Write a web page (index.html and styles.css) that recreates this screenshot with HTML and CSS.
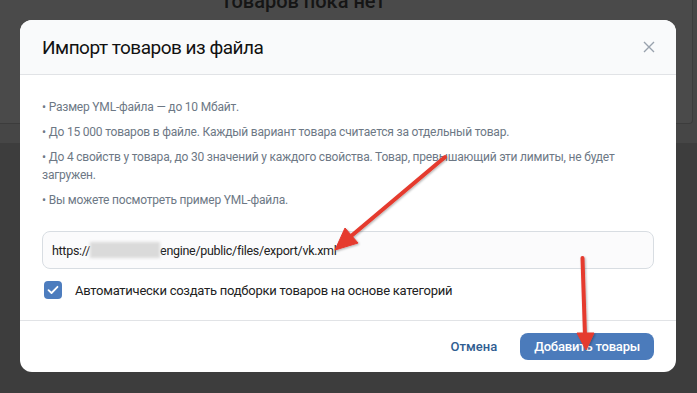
FILE: index.html
```html
<!DOCTYPE html>
<html lang="ru">
<head>
    <meta charset="UTF-8">
    <meta name="viewport" content="width=device-width, initial-scale=1.0">
    <title>Импорт товаров из файла</title>
    <link rel="stylesheet" href="styles.css">
</head>
<body>
    <div class="page">
        <div class="page-top">
            <div class="page-card">
                <h2 class="page-title">Товаров пока нет</h2>
            </div>
        </div>
    </div>

    <div class="overlay">
        <div class="modal">
            <div class="modal-header">
                <h1 class="modal-title">Импорт товаров из файла</h1>
                <button class="modal-close" type="button" aria-label="Закрыть">
                    <svg width="12" height="12" viewBox="0 0 12 12">
                        <path d="M1 1 L11 11 M11 1 L1 11" stroke="#99a2ad" stroke-width="1.4" fill="none"/>
                    </svg>
                </button>
            </div>
            <div class="modal-body">
                <ul class="rules">
                    <li>Размер YML-файла — до 10 Мбайт.</li>
                    <li>До 15 000 товаров в файле. Каждый вариант товара считается за отдельный товар.</li>
                    <li>До 4 свойств у товара, до 30 значений у каждого свойства. Товар, превышающий эти лимиты, не будет загружен.</li>
                    <li>Вы можете посмотреть пример YML-файла.</li>
                </ul>
                <div class="url-field">https://<span class="blur"></span>engine/public/files/export/vk.xml</div>
                <label class="check-row">
                    <span class="check-box">
                        <svg width="12" height="10" viewBox="0 0 12 10">
                            <path d="M1.5 5.2 L4.5 8 L10.5 1.8" stroke="#fff" stroke-width="1.8" fill="none" stroke-linecap="round" stroke-linejoin="round"/>
                        </svg>
                    </span>
                    Автоматически создать подборки товаров на основе категорий
                </label>
            </div>
            <div class="modal-footer">
                <button class="btn-cancel" type="button">Отмена</button>
                <button class="btn-primary" type="button">Добавить товары</button>
            </div>
        </div>
    </div>

    <!-- red annotation arrows over the dialog -->
    <svg class="marks" width="697" height="393" viewBox="0 0 697 393">
        <defs>
            <filter id="shade" x="-20%" y="-20%" width="140%" height="140%">
                <feDropShadow dx="1" dy="1" stdDeviation="1" flood-color="#000" flood-opacity="0.3"/>
            </filter>
        </defs>
        <g fill="#e53a2f" stroke="#e53a2f" filter="url(#shade)">
            <line x1="445" y1="157" x2="350" y2="237" stroke-width="4" stroke-linecap="round"/>
            <polygon points="335,250 358,243 345,228" stroke-width="1" stroke-linejoin="round"/>
            <line x1="582.5" y1="258" x2="585" y2="336" stroke-width="4" stroke-linecap="round"/>
            <polygon points="586,350 577,333 594,333" stroke-width="1" stroke-linejoin="round"/>
        </g>
    </svg>
</body>
</html>
```

FILE: styles.css
```css
html, body {
    margin: 0;
    height: 100%;
    overflow: hidden;
    background: #3d3d3d;
    font-family: Roboto, 'Noto Sans', sans-serif;
}
.page-top {
    height: 143px;
    background: #464646;
}
.page-card {
    width: 606px;
    height: 123px;
    padding-right: 86px;
    background: #4a4a4a;
    border-right: 1px solid #3c3c3c;
    border-bottom: 1px solid #3c3c3c;
    border-bottom-right-radius: 4px;
    overflow: hidden;
}
.page-title {
    margin: -11px 0 0;
    font-size: 20px;
    line-height: 24px;
    font-weight: 500;
    color: #151515;
    text-align: center;
}
.overlay {
    position: fixed;
    inset: 0;
    padding: 20px;
    display: flex;
    align-items: flex-start;
}
.modal {
    width: 656px;
    background: #fff;
    border-radius: 12px;
    overflow: hidden;
}
.modal-header {
    height: 54px;
    padding: 0 22px;
    display: flex;
    align-items: center;
    justify-content: space-between;
    background: #f9fafb;
    border-bottom: 1px solid #e1e3e6;
}
.modal-title {
    margin: 0;
    font-size: 19px;
    font-weight: 400;
    color: #111;
    letter-spacing: -0.5px;
}
.modal-close {
    border: 0;
    padding: 0;
    background: none;
    width: 12px;
    height: 12px;
    margin-right: -1px;
}
.modal-close svg {
    display: block;
}
.modal-body {
    padding: 23px 22px 20px;
}
.rules {
    list-style: none;
    margin: 0;
    padding: 0;
    display: flex;
    flex-direction: column;
    gap: 7px;
    font-size: 12px;
    line-height: 18px;
    letter-spacing: -0.2px;
    color: #6d7885;
}
.rules li::before {
    content: "• ";
}
.url-field {
    margin-top: 22px;
    height: 36px;
    padding: 0 9px;
    display: flex;
    align-items: center;
    background: #fbfbfc;
    border: 1px solid #d8dde2;
    border-radius: 8px;
    font-size: 12.5px;
    letter-spacing: -0.3px;
    color: #222;
}
.blur {
    display: inline-block;
    width: 70px;
    height: 16px;
    background: #dadada;
    filter: blur(1.5px);
}
.check-row {
    margin-top: 11px;
    height: 20px;
    display: flex;
    align-items: center;
    gap: 13px;
    font-size: 13px;
    letter-spacing: -0.25px;
    color: #222;
}
.check-box {
    width: 18px;
    height: 18px;
    margin-left: 2px;
    border-radius: 4px;
    background: #4d7dbe;
    display: flex;
    align-items: center;
    justify-content: center;
}
.modal-footer {
    height: 51px;
    padding: 0 22px;
    display: flex;
    align-items: center;
    justify-content: flex-end;
    gap: 11px;
    border-top: 1px solid #e1e3e6;
}
.btn-cancel, .btn-primary {
    border: 0;
    font-family: inherit;
    font-size: 13px;
    font-weight: 500;
    height: 27px;
    border-radius: 8px;
}
.btn-cancel {
    background: none;
    color: #2f5d91;
    padding: 0 12px;
}
.btn-primary {
    background: #4b7bbb;
    color: #fff;
    padding: 0 14px;
    letter-spacing: -0.2px;
}
.marks {
    position: fixed;
    left: 0;
    top: 0;
    pointer-events: none;
}
```
